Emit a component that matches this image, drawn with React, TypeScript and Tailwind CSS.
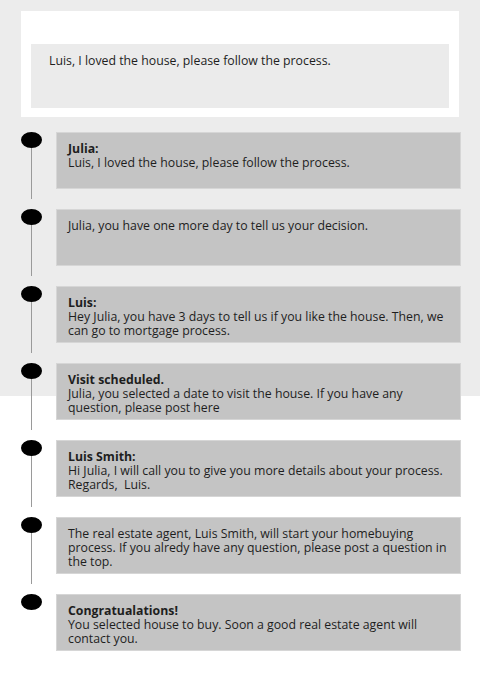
import React from "react";

type Item = { title?: string; text: string[] };

const items: Item[] = [
  { title: "Julia:", text: ["Luis, I loved the house, please follow the process."] },
  { text: ["Julia, you have one more day to tell us your decision."] },
  {
    title: "Luis:",
    text: ["Hey Julia, you have 3 days to tell us if you like the house. Then, we", "can go to mortgage process."],
  },
  {
    title: "Visit scheduled.",
    text: ["Julia, you selected a date to visit the house. If you have any", "question, please post here"],
  },
  {
    title: "Luis Smith:",
    text: ["Hi Julia, I will call you to give you more details about your process.", "Regards,  Luis."],
  },
  {
    text: [
      "The real estate agent, Luis Smith, will start your homebuying",
      "process. If you alredy have any question, please post a question in",
      "the top.",
    ],
  },
  {
    title: "Congratualations!",
    text: ["You selected house to buy. Soon a good real estate agent will", "contact you."],
  },
];

export default function App() {
  return (
    <div
      className="min-h-[673px] w-[480px] bg-[linear-gradient(to_bottom,#ececec_396px,#ffffff_396px)] pt-[11px] text-[#1e1e1e] text-[12.3px] leading-[14px]"
      style={{ fontFamily: '"Open Sans", "Liberation Sans", sans-serif' }}
    >
      <div className="mx-[21px] h-[106px] bg-white px-[10px] pt-[33px]">
        <div className="h-[64px] bg-[#ebebeb] pl-[18px] pt-[10px]">
          Luis, I loved the house, please follow the process.
        </div>
      </div>
      <div className="mt-[15px] flex flex-col gap-[20px] pl-[21px] pr-[19px]">
        {items.map((it, i) => (
          <div key={i} className="flex">
            <div className="relative w-[35px] shrink-0">
              <div className="h-[16px] w-[21px] rounded-[50%] bg-black" />
              {i < items.length - 1 && (
                <div className="absolute left-[10px] top-[16px] h-[51px] w-px bg-[#9a9a9a]" />
              )}
            </div>
            <div className="h-[57px] flex-1 border border-[#d6d6d6] bg-[#c4c4c4] pl-[11px] pt-[9px]">
              {it.title && <div className="font-bold">{it.title}</div>}
              {it.text.map((t, j) => (
                <div key={j} className="whitespace-pre">
                  {t}
                </div>
              ))}
            </div>
          </div>
        ))}
      </div>
    </div>
  );
}
